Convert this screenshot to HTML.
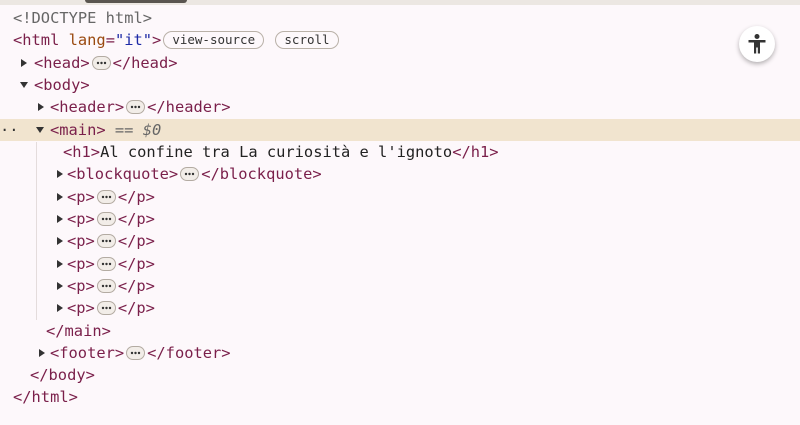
<!DOCTYPE html>
<html><head><style>
body{margin:0;width:800px;height:425px;background:#fdf8fb;overflow:hidden;position:relative;font-family:"DejaVu Sans Mono","Liberation Mono",monospace;font-size:15.4px;}
.top{position:absolute;left:0;top:0;width:800px;height:5px;background:#ece7e2}
.tab{position:absolute;left:85px;top:0;width:102px;height:3px;background:#5a5550;border-radius:0 0 3px 3px}
.l{position:absolute;height:22px;line-height:22px;white-space:pre;color:#7a1f4a}
.a{color:#9a4a10}.v{color:#1d2aa6}.x{color:#222}.g{color:#666}
.hl{position:absolute;left:0;top:119px;width:800px;height:22px;background:#f1e4cf}
.ar{display:inline-block;width:0;height:0;border-top:4.5px solid transparent;border-bottom:4.5px solid transparent;border-left:6px solid #333;position:absolute;top:7px}
.dn{display:inline-block;width:0;height:0;border-left:4.5px solid transparent;border-right:4.5px solid transparent;border-top:6px solid #333;position:absolute;top:8px}
.dots{display:inline-block;width:19px;height:14px;vertical-align:middle;position:relative;top:-1px;margin:0 2px}
.pill{display:inline-block;border:1px solid #b9b1a8;border-radius:10px;font-size:12.5px;line-height:16px;padding:0 8px;color:#333;vertical-align:middle;position:relative;top:-1px;margin-left:2px}
.vl{position:absolute;left:36px;top:142px;width:1px;height:178px;background:#e4dcdc}
.acc{position:absolute;left:739px;top:26px;width:36px;height:36px;border-radius:50%;background:#fff;box-shadow:0 2px 5px rgba(0,0,0,.3)}
</style></head><body>
<svg width="0" height="0" style="position:absolute"><defs><symbol id="d" viewBox="0 0 19 14"><rect x="0.5" y="0.5" width="18" height="13" rx="6.5" fill="#f2ede8" stroke="#b3aba2"/><circle cx="6" cy="7" r="1.2" fill="#333"/><circle cx="9.5" cy="7" r="1.2" fill="#333"/><circle cx="13" cy="7" r="1.2" fill="#333"/></symbol></defs></svg>
<div class="top"></div><div class="tab"></div>
<div class="hl"></div><div class="vl"></div>
<div class="l g" style="left:13px;top:7px">&lt;!DOCTYPE html&gt;</div>
<div class="l" style="left:13px;top:29px">&lt;html <span class="a">lang</span>=<span class="v">"it"</span>&gt;<span class="pill">view-source</span> <span class="pill">scroll</span></div>
<div class="l" style="left:34px;top:52px"><span class="ar" style="left:-13px"></span>&lt;head&gt;<svg class="dots"><use href="#d"/></svg>&lt;/head&gt;</div>
<div class="l" style="left:34px;top:74px"><span class="dn" style="left:-14px"></span>&lt;body&gt;</div>
<div class="l" style="left:50px;top:96px"><span class="ar" style="left:-12px"></span>&lt;header&gt;<svg class="dots"><use href="#d"/></svg>&lt;/header&gt;</div>
<div class="l" style="left:0;top:119px;color:#333">··</div>
<div class="l" style="left:50px;top:119px"><span class="dn" style="left:-14px"></span>&lt;main&gt; <span class="g">== <i>$0</i></span></div>
<div class="l" style="left:63px;top:141px">&lt;h1&gt;<span class="x">Al confine tra La curiosità e l'ignoto</span>&lt;/h1&gt;</div>
<div class="l" style="left:67px;top:163px"><span class="ar" style="left:-10px"></span>&lt;blockquote&gt;<svg class="dots"><use href="#d"/></svg>&lt;/blockquote&gt;</div>
<div class="l" style="left:67px;top:186px"><span class="ar" style="left:-10px"></span>&lt;p&gt;<svg class="dots"><use href="#d"/></svg>&lt;/p&gt;</div>
<div class="l" style="left:67px;top:208px"><span class="ar" style="left:-10px"></span>&lt;p&gt;<svg class="dots"><use href="#d"/></svg>&lt;/p&gt;</div>
<div class="l" style="left:67px;top:230px"><span class="ar" style="left:-10px"></span>&lt;p&gt;<svg class="dots"><use href="#d"/></svg>&lt;/p&gt;</div>
<div class="l" style="left:67px;top:253px"><span class="ar" style="left:-10px"></span>&lt;p&gt;<svg class="dots"><use href="#d"/></svg>&lt;/p&gt;</div>
<div class="l" style="left:67px;top:275px"><span class="ar" style="left:-10px"></span>&lt;p&gt;<svg class="dots"><use href="#d"/></svg>&lt;/p&gt;</div>
<div class="l" style="left:67px;top:297px"><span class="ar" style="left:-10px"></span>&lt;p&gt;<svg class="dots"><use href="#d"/></svg>&lt;/p&gt;</div>
<div class="l" style="left:46px;top:320px">&lt;/main&gt;</div>
<div class="l" style="left:50px;top:342px"><span class="ar" style="left:-11px"></span>&lt;footer&gt;<svg class="dots"><use href="#d"/></svg>&lt;/footer&gt;</div>
<div class="l" style="left:30px;top:364px">&lt;/body&gt;</div>
<div class="l" style="left:13px;top:386px">&lt;/html&gt;</div>
<div class="acc"><svg width="36" height="36" viewBox="0 0 36 36"><circle cx="18" cy="10.5" r="2.5" fill="#333"/><path d="M9.5 14h17v2.5h-5.5v11h-2.2v-6h-1.6v6h-2.2v-11h-5.5z" fill="#333"/></svg></div>
</body></html>
